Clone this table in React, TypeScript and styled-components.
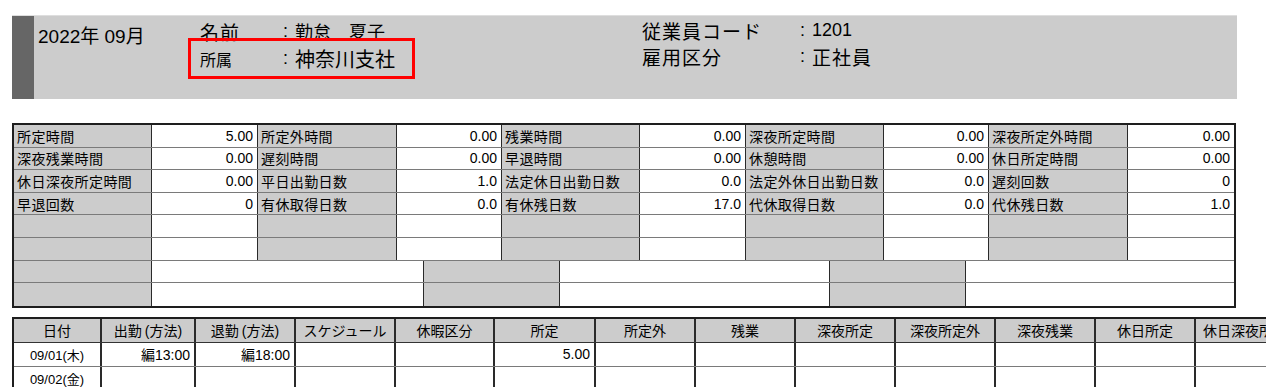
import styled, { createGlobalStyle } from 'styled-components';

const GlobalStyle = createGlobalStyle`
  html, body {
    margin: 0;
    padding: 0;
    overflow: hidden;
    background: #ffffff;
  }

  body {
    font-family: "Liberation Sans", "Noto Sans CJK JP", sans-serif;
    color: #000000;
  }
`;

const Page = styled.div`
  width: 1266px;
  height: 387px;
  padding-left: 12px;
  box-sizing: border-box;
  overflow: hidden;
`;

/* ---------- header ---------- */

const Header = styled.header`
  margin-top: 15px;
  width: 1225px;
  height: 84px;
  display: flex;
  background: #cccccc;
  border-top: 1px solid #dedede;
  box-sizing: border-box;
`;

const Stripe = styled.div`
  width: 22px;
  background: #666666;
`;

const Period = styled.div`
  width: 150px;
  padding: 9px 0 0 4px;
  font-size: 19px;
  line-height: 24px;
  white-space: pre;
`;

const InfoBlock = styled.div`
  width: 227px;
  padding-top: 8px;
  display: flex;
  flex-direction: column;
`;

const NameRow = styled.div`
  display: flex;
  align-items: center;
  height: 14px;
  padding-left: 12px;
  white-space: pre;
`;

const Highlight = styled.div`
  height: 41px;
  display: flex;
  align-items: center;
  padding-left: 9px;
  border: 3px solid #ff0000;
  box-sizing: border-box;
  white-space: pre;
`;

const Label = styled.span<{ $width: number; $size?: number }>`
  width: ${(p) => p.$width}px;
  font-size: ${(p) => p.$size ?? 19}px;
  letter-spacing: ${(p) => (p.$size && p.$size < 17 ? 0 : 1)}px;
`;

const Colon = styled.span`
  width: 12px;
  font-size: 18px;
`;

const Value = styled.span<{ $size?: number; $spaced?: boolean }>`
  font-size: ${(p) => p.$size ?? 19}px;
  letter-spacing: ${(p) => (p.$spaced ? 1 : 0)}px;
`;

const EmployeeBlock = styled.div`
  margin-left: 227px;
  padding-top: 1px;
  display: flex;
  flex-direction: column;
`;

const EmployeeRow = styled.div`
  display: flex;
  align-items: center;
  height: 26px;
  white-space: pre;
`;

/* ---------- summary ---------- */

const Summary = styled.div`
  margin-top: 24px;
  width: 1224px;
  border: 2px solid #1e1e1e;
  box-sizing: border-box;
`;

const SummaryRow = styled.div<{ $cols: string }>`
  display: grid;
  grid-template-columns: ${(p) => p.$cols};
  height: 22.6px;
  border-bottom: 1px solid #7a7a7a;
  box-sizing: border-box;

  &:last-child {
    border-bottom: none;
  }
`;

const Cell = styled.div<{ $label?: boolean }>`
  display: flex;
  align-items: center;
  justify-content: ${(p) => (p.$label ? 'flex-start' : 'flex-end')};
  padding: 0 4px 0 3px;
  background: ${(p) => (p.$label ? '#cccccc' : '#ffffff')};
  border-right: 1px solid #2a2a2a;
  font-size: 14px;
  letter-spacing: ${(p) => (p.$label ? '0.4px' : '0')};
  white-space: nowrap;
  overflow: hidden;

  &:last-child {
    border-right: none;
  }
`;

/* ---------- daily table ---------- */

const Daily = styled.div`
  margin-top: 9px;
  width: max-content;
  border-top: 2px solid #1e1e1e;
  border-left: 2px solid #1e1e1e;
`;

const DailyRow = styled.div<{ $head?: boolean }>`
  display: grid;
  grid-template-columns: 88px 94px 100px 100px 99px 101px 100px 100px 100px 100px 100px 100px 100px;
  height: 24px;
  background: ${(p) => (p.$head ? '#cccccc' : '#ffffff')};
  border-bottom: 1px solid ${(p) => (p.$head ? '#333333' : '#7a7a7a')};
  box-sizing: border-box;
`;

const DailyCell = styled.div<{ $align?: 'center' | 'right' }>`
  display: flex;
  align-items: center;
  justify-content: ${(p) => (p.$align === 'right' ? 'flex-end' : 'center')};
  padding: 0 4px;
  border-right: 2px solid #2a2a2a;
  font-size: 14px;
  white-space: nowrap;
  overflow: hidden;
`;

const Paren = styled.span`
  margin-left: 3px;
`;

const DateText = styled.span`
  font-size: 13px;
`;

const upperCols = '138px 106px 139px 105px 138px 106px 138px 105px 139px 106px';
const lowerCols = '138px 272px 136px 270px 136px 268px';

const summaryData: [string, string][][] = [
  [
    ['所定時間', '5.00'],
    ['所定外時間', '0.00'],
    ['残業時間', '0.00'],
    ['深夜所定時間', '0.00'],
    ['深夜所定外時間', '0.00'],
  ],
  [
    ['深夜残業時間', '0.00'],
    ['遅刻時間', '0.00'],
    ['早退時間', '0.00'],
    ['休憩時間', '0.00'],
    ['休日所定時間', '0.00'],
  ],
  [
    ['休日深夜所定時間', '0.00'],
    ['平日出勤日数', '1.0'],
    ['法定休日出勤日数', '0.0'],
    ['法定外休日出勤日数', '0.0'],
    ['遅刻回数', '0'],
  ],
  [
    ['早退回数', '0'],
    ['有休取得日数', '0.0'],
    ['有休残日数', '17.0'],
    ['代休取得日数', '0.0'],
    ['代休残日数', '1.0'],
  ],
];

const dailyHeads = [
  '日付',
  '出勤',
  '退勤',
  'スケジュール',
  '休暇区分',
  '所定',
  '所定外',
  '残業',
  '深夜所定',
  '深夜所定外',
  '深夜残業',
  '休日所定',
  '休日深夜所定',
];

const dailyRows = [
  ['09/01(木)', '編13:00', '編18:00', '', '', '5.00'],
  ['09/02(金)'],
];

export default function App() {
  return (
    <>
      <GlobalStyle />
      <Page>
        <Header>
          <Stripe />
          <Period>2022年 09月</Period>
          <InfoBlock>
            <NameRow>
              <Label $width={83}>名前</Label>
              <Colon>:</Colon>
              <Value $size={18}>勤怠　夏子</Value>
            </NameRow>
            <Highlight>
              <Label $width={83} $size={16}>
                所属
              </Label>
              <Colon>:</Colon>
              <Value $size={20}>神奈川支社</Value>
            </Highlight>
          </InfoBlock>
          <EmployeeBlock>
            <EmployeeRow>
              <Label $width={158}>従業員コード</Label>
              <Colon>:</Colon>
              <Value $size={18}>1201</Value>
            </EmployeeRow>
            <EmployeeRow>
              <Label $width={158}>雇用区分</Label>
              <Colon>:</Colon>
              <Value $spaced>正社員</Value>
            </EmployeeRow>
          </EmployeeBlock>
        </Header>

        <Summary>
          {summaryData.map((row, i) => (
            <SummaryRow key={i} $cols={upperCols}>
              {row.map(([label, value]) => [
                <Cell key={label} $label>
                  {label}
                </Cell>,
                <Cell key={label + '-v'}>{value}</Cell>,
              ])}
            </SummaryRow>
          ))}
          {[0, 1].map((i) => (
            <SummaryRow key={'e' + i} $cols={upperCols}>
              {Array.from({ length: 10 }, (_, j) => (
                <Cell key={j} $label={j % 2 === 0} />
              ))}
            </SummaryRow>
          ))}
          {[0, 1].map((i) => (
            <SummaryRow key={'w' + i} $cols={lowerCols}>
              {Array.from({ length: 6 }, (_, j) => (
                <Cell key={j} $label={j % 2 === 0} />
              ))}
            </SummaryRow>
          ))}
        </Summary>

        <Daily>
          <DailyRow $head>
            {dailyHeads.map((h, j) => (
              <DailyCell key={h}>
                {h}
                {(j === 1 || j === 2) && <Paren>(方法)</Paren>}
              </DailyCell>
            ))}
          </DailyRow>
          {dailyRows.map((row, i) => (
            <DailyRow key={i}>
              {dailyHeads.map((h, j) => (
                <DailyCell key={h} $align={j === 0 ? 'center' : 'right'}>
                  {j === 0 ? <DateText>{row[0]}</DateText> : row[j] ?? ''}
                </DailyCell>
              ))}
            </DailyRow>
          ))}
        </Daily>
      </Page>
    </>
  );
}
